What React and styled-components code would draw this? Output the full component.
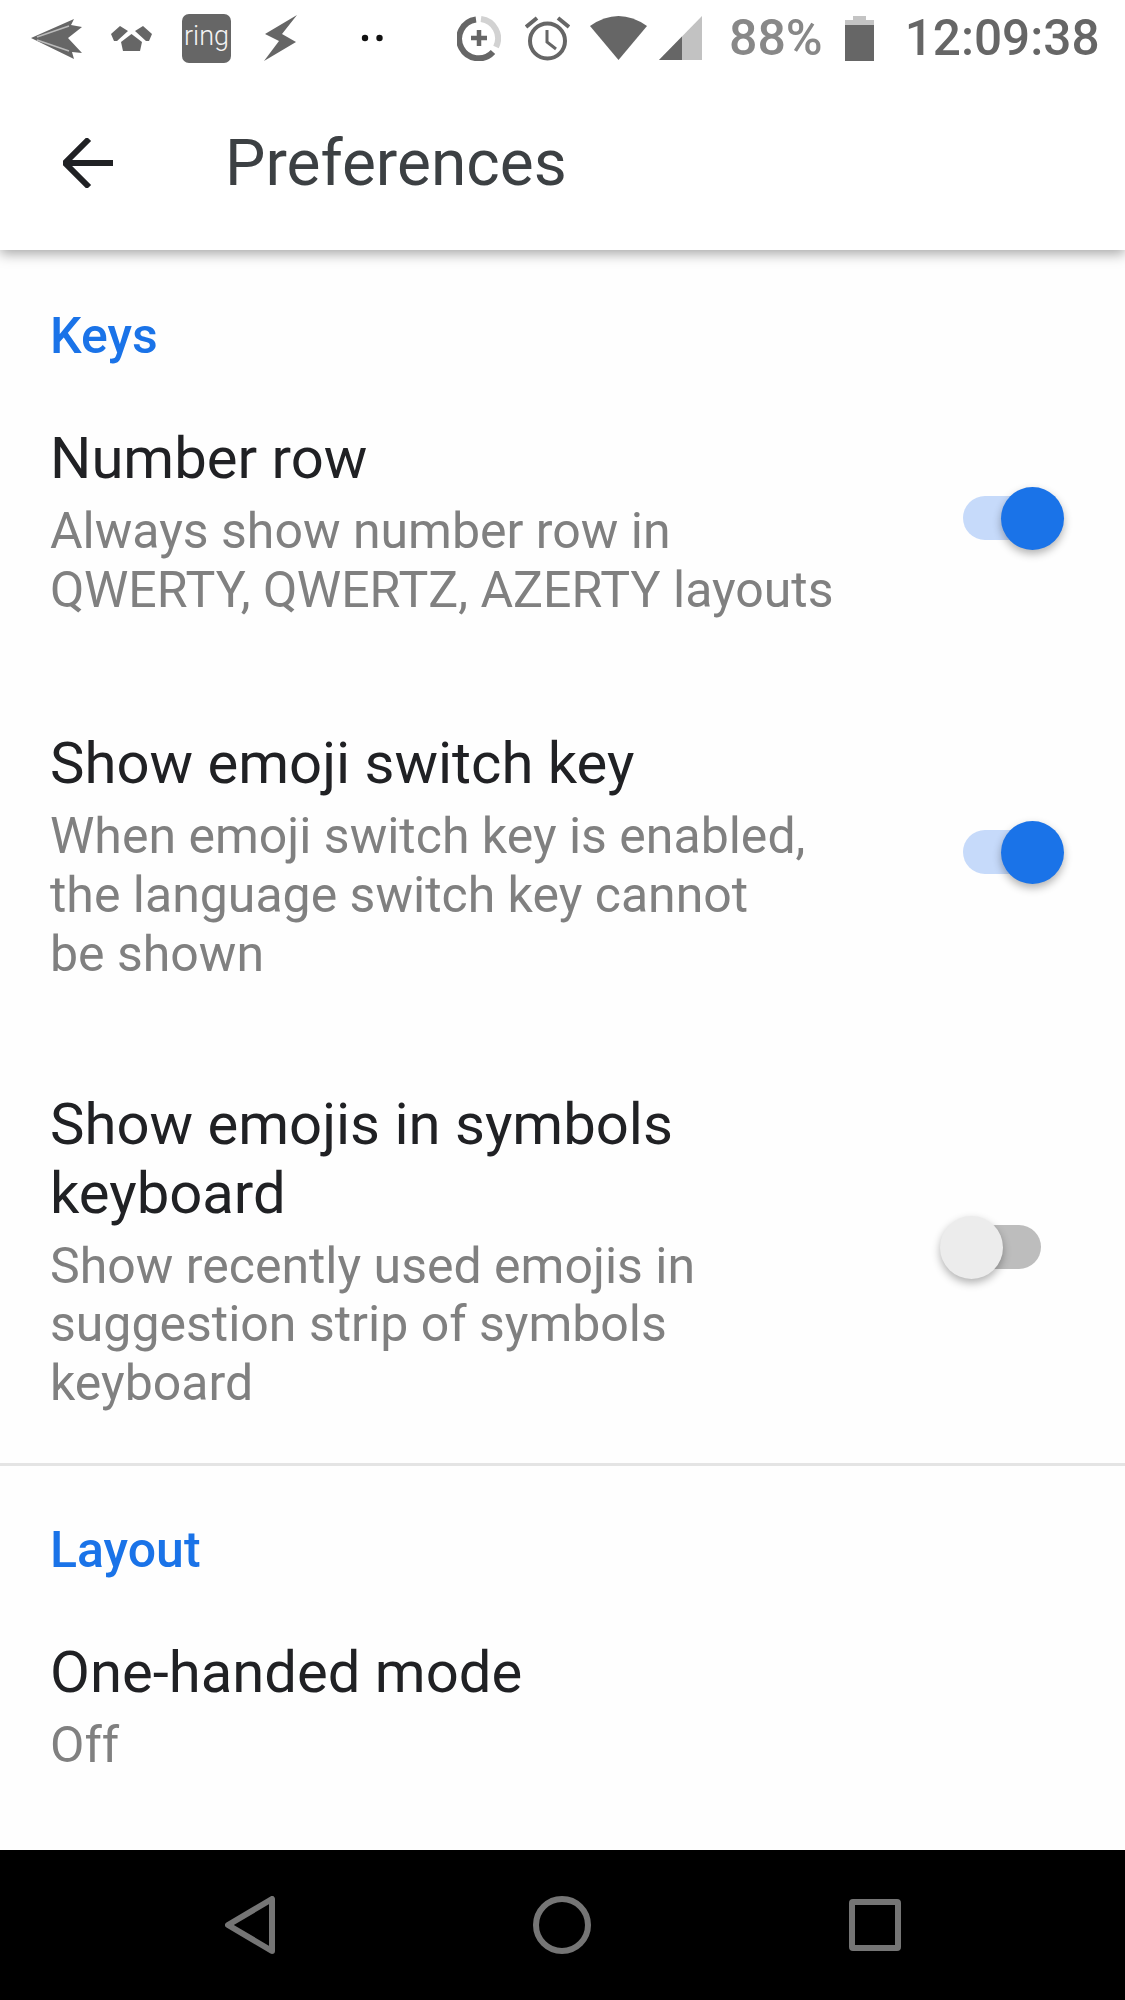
import styled, { createGlobalStyle } from "styled-components";

const GlobalStyle = createGlobalStyle`
  html, body {
    margin: 0;
    background: #ffffff;
    font-family: Roboto, "Liberation Sans", sans-serif;
  }
`;

const Page = styled.div`
  width: 1125px;
  height: 2000px;
  display: flex;
  flex-direction: column;
  overflow: hidden;
  background: #fefefe;
`;

const TopBar = styled.header`
  height: 250px;
  flex: none;
  display: flex;
  flex-direction: column;
  background: #ffffff;
  box-shadow: 0 4px 12px rgba(0, 0, 0, 0.34);
  position: relative;
`;

const StatusBar = styled.div`
  height: 76px;
  display: flex;
  align-items: center;
  padding-left: 31px;
`;

const StatusIcon = styled.svg`
  flex: none;
  margin-left: ${(p) => p.$gap || 0}px;
`;

const RingBadge = styled.div`
  flex: none;
  width: 49px;
  height: 49px;
  margin-left: 30px;
  border-radius: 7px;
  background: #666666;
  color: #f4f4f4;
  font-size: 27px;
  font-weight: 300;
  line-height: 45px;
  text-align: center;
`;

const StatusText = styled.span`
  flex: none;
  margin-left: ${(p) => p.$gap}px;
  color: ${(p) => p.$color};
  font-size: ${(p) => p.$size}px;
  font-weight: 500;
  line-height: 76px;
`;

const ActionBar = styled.div`
  display: flex;
  align-items: center;
  height: 174px;
  padding-left: 63px;
`;

const Title = styled.h1`
  margin: 0 0 0 112px;
  color: #3c4043;
  font-size: 64px;
  font-weight: 400;
`;

const Content = styled.main`
  flex: 1;
  display: flex;
  flex-direction: column;
  padding-top: 56px;
`;

const SectionTitle = styled.h2`
  margin: 0 0 58px;
  padding-left: 50px;
  color: #1a73e8;
  font-size: 50px;
  font-weight: 500;
  line-height: 60px;
`;

const Row = styled.div`
  display: flex;
  align-items: center;
  justify-content: space-between;
  padding: 0 61px 0 50px;
  margin-bottom: ${(p) => p.$after || 0}px;
`;

const RowText = styled.div`
  width: 830px;
`;

const RowTitle = styled.div`
  color: #202124;
  font-size: 58px;
  line-height: 69px;
`;

const RowDesc = styled.div`
  margin-top: 9px;
  color: #808080;
  font-size: 50px;
  line-height: 58.7px;
`;

const Track = styled.div`
  position: relative;
  width: 77px;
  height: 44px;
  margin: 0 ${(p) => (p.$on ? 24 : 23)}px 8px 0;
  border-radius: 22px;
  background: ${(p) => (p.$on ? "#c6dafa" : "#bdbdbd")};
`;

const Thumb = styled.div`
  position: absolute;
  top: -9px;
  ${(p) => (p.$on ? "right: -24px;" : "left: -24px;")}
  width: 63px;
  height: 63px;
  border-radius: 50%;
  background: ${(p) => (p.$on ? "#1a73e8" : "#ececec")};
  box-shadow: 0 4px 8px rgba(0, 0, 0, 0.3);
`;

const Divider = styled.hr`
  width: 100%;
  height: 3px;
  margin: 0 0 54px;
  border: 0;
  background: #e4e4e4;
`;

const NavBar = styled.nav`
  height: 150px;
  flex: none;
  display: flex;
  align-items: center;
  justify-content: space-between;
  padding: 0 224px 0 225px;
  background: #000000;
`;

const Switch = ({ on }) => (
  <Track $on={on}>
    <Thumb $on={on} />
  </Track>
);

const Setting = ({ title, desc, on, after }) => (
  <Row $after={after}>
    <RowText>
      <RowTitle>{title}</RowTitle>
      <RowDesc>{desc}</RowDesc>
    </RowText>
    {on !== undefined && <Switch on={on} />}
  </Row>
);

const StatusIcons = () => (
  <StatusBar>
    {/* plane */}
    <StatusIcon width="51" height="41" viewBox="0 0 51 41">
      <path d="M0 20 43 1 40 7 51 9 37 20 51 35 41 34 43 41Z" fill="#666" />
      <path d="M6 19 38 8M6 22 38 33" stroke="#bbb" strokeWidth="1.5" />
    </StatusIcon>
    {/* houses */}
    <StatusIcon width="41" height="25" viewBox="0 0 41 25" $gap="29">
      <path d="M20.5 8 31 16 29 25H12L10 16Z" fill="#666" />
      <path d="M9 0 17 5 6 15H3L0 8ZM32 0 24 5 35 15H38L41 8Z" fill="#666" />
    </StatusIcon>
    <RingBadge>ring</RingBadge>
    {/* bolt */}
    <StatusIcon width="33" height="46" viewBox="0 0 33 46" $gap="33">
      <path d="M33 0 1 19 15 26 0 46 32 27 18 19Z" fill="#666" />
    </StatusIcon>
    {/* overflow dots */}
    <StatusIcon width="22" height="8" viewBox="0 0 22 8" $gap="64">
      <circle cx="4" cy="4" r="3.2" fill="#111" />
      <circle cx="18.5" cy="4" r="3.2" fill="#111" />
    </StatusIcon>
    {/* data saver */}
    <StatusIcon width="44" height="45" viewBox="0 0 44 45" $gap="74">
      <path d="M19 3.5A19.5 19.5 0 1 0 36 36" fill="none" stroke="#666" strokeWidth="6" />
      <path d="M24 3A19.5 19.5 0 0 1 39 31" fill="none" stroke="#d2d2d2" strokeWidth="6" />
      <path d="M22 14V30M14 22H30" stroke="#666" strokeWidth="4.5" />
    </StatusIcon>
    {/* alarm */}
    <StatusIcon width="45" height="45" viewBox="0 0 45 45" $gap="24">
      <circle cx="22.5" cy="25" r="17.5" fill="none" stroke="#666" strokeWidth="4" />
      <path d="M22 14V26L31 33" fill="none" stroke="#666" strokeWidth="3" />
      <path d="M1 11 12 2M44 11 33 2" stroke="#666" strokeWidth="4" />
    </StatusIcon>
    {/* wifi */}
    <StatusIcon width="57" height="44" viewBox="0 0 57 44" $gap="20">
      <path d="M28.5 44 0 10Q28.5 -10 57 10Z" fill="#666" />
    </StatusIcon>
    {/* signal */}
    <StatusIcon width="43" height="44" viewBox="0 0 43 44" $gap="12">
      <path d="M0 44 43 0V44Z" fill="#c2c2c2" />
      <path d="M0 44 23 20.5V44Z" fill="#666" />
    </StatusIcon>
    <StatusText $gap="27" $size="50" $color="#888888">88%</StatusText>
    {/* battery */}
    <StatusIcon width="29" height="45" viewBox="0 0 29 45" $gap="22">
      <path d="M8 0H21V4H29V9H0V4H8Z" fill="#c4c4c4" />
      <path d="M0 9H29V45H0Z" fill="#666" />
    </StatusIcon>
    <StatusText $gap="31" $size="49.5" $color="#666666">12:09:38</StatusText>
  </StatusBar>
);

export default function App() {
  return (
    <Page>
      <GlobalStyle />
      <TopBar>
        <StatusIcons />
        <ActionBar>
          <svg width="50" height="50" viewBox="0 0 50 50">
            <path d="M50 25H3M26 1 2 25 26 49" fill="none" stroke="#202124" strokeWidth="6" />
          </svg>
          <Title>Preferences</Title>
        </ActionBar>
      </TopBar>
      <Content>
        <SectionTitle>Keys</SectionTitle>
        <Setting
          title="Number row"
          desc={<>Always show number row in<br />QWERTY, QWERTZ, AZERTY layouts</>}
          on={true}
          after={110}
        />
        <Setting
          title="Show emoji switch key"
          desc={<>When emoji switch key is enabled,<br />the language switch key cannot<br />be shown</>}
          on={true}
          after={106}
        />
        <Setting
          title={<>Show emojis in symbols<br />keyboard</>}
          desc={<>Show recently used emojis in<br />suggestion strip of symbols<br />keyboard</>}
          on={false}
          after={50}
        />
        <Divider />
        <SectionTitle>Layout</SectionTitle>
        <Setting title="One-handed mode" desc="Off" />
      </Content>
      <NavBar>
        <svg width="50" height="58" viewBox="0 0 50 58">
          <path d="M47 3V55L3 29Z" fill="none" stroke="#757575" strokeWidth="6" strokeLinejoin="round" />
        </svg>
        <svg width="58" height="58" viewBox="0 0 58 58">
          <circle cx="29" cy="29" r="26" fill="none" stroke="#757575" strokeWidth="6" />
        </svg>
        <svg width="52" height="52" viewBox="0 0 52 52">
          <rect x="3" y="3" width="46" height="46" rx="1" fill="none" stroke="#757575" strokeWidth="6" />
        </svg>
      </NavBar>
    </Page>
  );
}
